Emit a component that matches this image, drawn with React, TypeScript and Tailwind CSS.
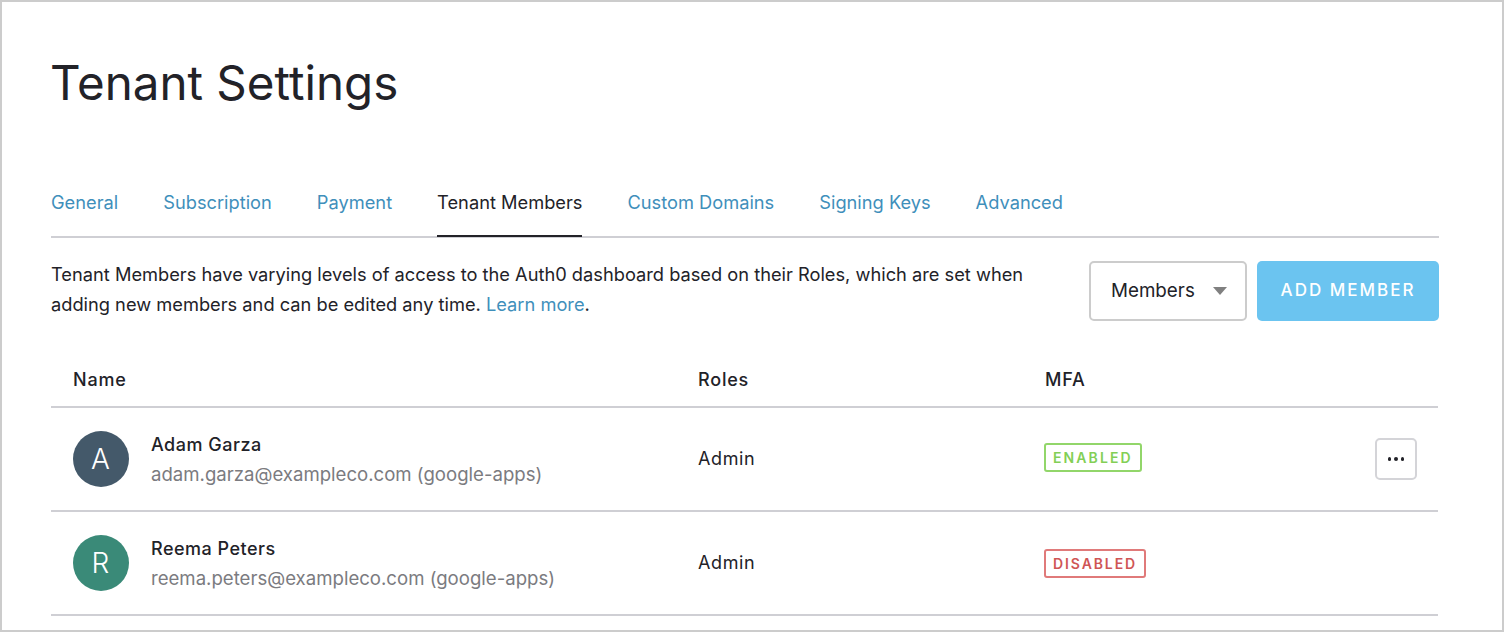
const font = "font-['Inter','Liberation_Sans',sans-serif]";

const tabs = ["General", "Subscription", "Payment", "Tenant Members", "Custom Domains", "Signing Keys", "Advanced"];

function Row({ initial, color, name, email, enabled }: { initial: string; color: string; name: string; email: string; enabled: boolean }) {
  return (
    <div className="flex h-[104px] items-center border-b-2 border-[#cfcfd4] pl-[22px] pr-[21px]">
      <div className="flex w-[625px] items-center">
        <div className={`flex h-14 w-14 shrink-0 items-center justify-center rounded-full pr-[1px] text-[28px] font-light text-white ${color}`}>{initial}</div>
        <div className="ml-[22px]">
          <div className="mt-[1px] text-[18px] leading-[26px] font-medium tracking-[0.5px] text-[#222228]">{name}</div>
          <div className="mt-[3px] text-[18.6px] leading-[26px] text-[#7b7b80]">{email}</div>
        </div>
      </div>
      <div className="-mt-[2px] w-[346px] text-[18px] tracking-[0.6px] text-[#222228]">Admin</div>
      <div className={`flex-1 ${enabled ? "-mt-[4px]" : ""}`}>
        {enabled ? (
          <span className="inline-block h-[29px] rounded-[3px] border-2 border-[#92d66a] px-[7px] text-[14px] leading-[25px] font-semibold tracking-[2.1px] text-[#83cf56]">ENABLED</span>
        ) : (
          <span className="inline-block h-[29px] rounded-[3px] border-2 border-[#e07a7a] px-[7px] text-[14px] leading-[25px] font-semibold tracking-[1.9px] text-[#cf5555]">DISABLED</span>
        )}
      </div>
      {enabled && (
        <button className="flex h-[42px] w-[42px] items-center justify-center gap-[3px] rounded-[5px] border-2 border-[#d4d4d8] bg-white">
          <span className="h-[3.5px] w-[3.5px] rounded-full bg-[#222228]" />
          <span className="h-[3.5px] w-[3.5px] rounded-full bg-[#222228]" />
          <span className="h-[3.5px] w-[3.5px] rounded-full bg-[#222228]" />
        </button>
      )}
    </div>
  );
}

export default function App() {
  return (
    <div className={`h-[632px] w-[1504px] overflow-hidden border-2 border-[#cccccc] bg-white pl-[49px] pr-[63px] ${font}`}>
      <h1 className="mt-[49px] -ml-[1px] text-[47.5px] leading-[64px] font-normal text-[#222228]">Tenant Settings</h1>
      <nav className="mt-[71px] flex h-[52px] gap-[45px] border-b-2 border-[#cfcfd4]">
        {tabs.map((t) => (
          <a key={t} className={`h-[51px] pt-[2px] text-[18.25px] leading-[28px] ${t === "Tenant Members" ? "border-b-2 border-[#222228] text-[#222228]" : "text-[#3f8fbb]"}`}>{t}</a>
        ))}
      </nav>
      <div className="mt-[21px] flex items-start justify-between">
        <p className="w-[1000px] text-[18.25px] leading-[30px] text-[#222228]">
          Tenant Members have varying levels of access to the Auth0 dashboard based on their Roles, which are set when adding new members and can be edited any time. <a className="text-[#3f8fbb]">Learn more</a>.
        </p>
        <div className="mt-[2px] flex gap-[10px]">
          <div className="flex h-[60px] w-[158px] items-center justify-between rounded-[5px] border-2 border-[#cccccc] pl-[20px] pr-[18px] text-[18.8px] text-[#222228]">
            Members
            <svg width="14" height="8" viewBox="0 0 14 8"><path d="M0 0h14L7 8z" fill="#808080" /></svg>
          </div>
          <button className="flex h-[60px] w-[182px] items-center justify-center rounded-[5px] bg-[#6bc4f0] text-[17px] font-medium tracking-[2px] text-white">ADD MEMBER</button>
        </div>
      </div>
      <div className="mr-[1px]">
        <div className="mt-[15px] flex h-[72px] items-center border-b-2 border-[#cfcfd4] pl-[22px] pt-[16px] text-[18px] font-medium tracking-[0.8px] text-[#222228]">
          <div className="w-[625px]">Name</div>
          <div className="w-[347px]">Roles</div>
          <div>MFA</div>
        </div>
        <Row initial="A" color="bg-[#44596a]" name="Adam Garza" email="adam.garza@exampleco.com (google-apps)" enabled />
        <Row initial="R" color="bg-[#3a8a78]" name="Reema Peters" email="reema.peters@exampleco.com (google-apps)" enabled={false} />
      </div>
    </div>
  );
}
